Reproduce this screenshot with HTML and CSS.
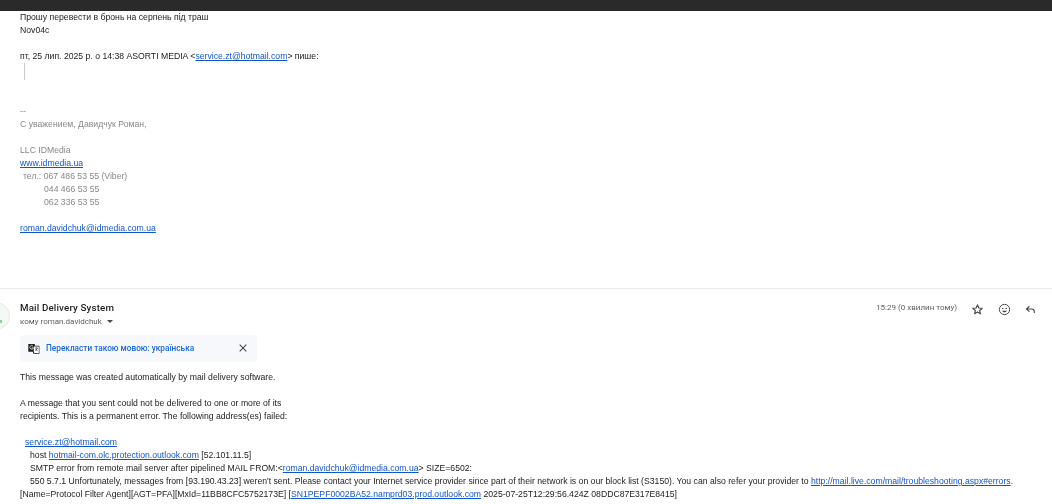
FILE: index.html
```html
<!DOCTYPE html>
<html lang="uk">
<head>
<meta charset="utf-8">
<title>Mail</title>
<link rel="stylesheet" href="styles.css">
</head>
<body>
<header class="topbar"></header>
<main class="thread">
  <section class="msg-first">
    <div class="text">
      <div>Прошу перевести в бронь на серпень під траш</div>
      <div>Nov04c</div>
      <div class="blank"></div>
      <div>пт, 25 лип. 2025 р. о 14:38 ASORTI MEDIA &lt;<a href="#">service.zt@hotmail.com</a>&gt; пише:</div>
      <div class="quote"></div>
      <div class="sig">
        <div>--</div>
        <div>С уважением, Давидчук Роман,</div>
        <div class="blank"></div>
        <div>LLC IDMedia</div>
        <div><a href="#">www.idmedia.ua</a></div>
        <div class="tel">тел.: 067 486 53 55 (Viber)</div>
        <div class="phone">044 466 53 55</div>
        <div class="phone">062 336 53 55</div>
        <div class="blank"></div>
        <div><a href="#">roman.davidchuk@idmedia.com.ua</a></div>
      </div>
    </div>
  </section>
  <section class="msg-second">
    <div class="avatar"><span class="avatar-mark"></span></div>
    <div class="head">
      <div class="who">
        <div class="sender">Mail Delivery System</div>
        <div class="to">кому roman.davidchuk <span class="caret"></span></div>
      </div>
      <div class="actions">
        <span class="time">15:29 (0 хвилин тому)</span>
        <svg class="icon star" viewBox="0 0 24 24"><path d="M12 3.500l2.500 5.700 6.200.6-4.700 4.100 1.400 6.100L12 16.800l-5.400 3.200L8 13.900 3.300 9.800l6.200-.6z" fill="none" stroke="#444746" stroke-width="2.100" stroke-linejoin="round"/></svg>
        <svg class="icon smile" viewBox="0 0 24 24"><circle cx="12" cy="12" r="9.500" fill="none" stroke="#444746" stroke-width="1.800"/><circle cx="8.800" cy="10" r="1.400" fill="#444746"/><circle cx="15.200" cy="10" r="1.400" fill="#444746"/><path d="M7.800 14.200h8.400c-.7 2-2.300 3.100-4.200 3.100s-3.500-1.100-4.200-3.100z" fill="#444746"/></svg>
        <svg class="icon reply" viewBox="0 0 24 24"><path d="M10 6l-5.500 5 5.500 5M5 11h9c3 0 5 2 5 5v2.500" fill="none" stroke="#444746" stroke-width="2"/></svg>
      </div>
    </div>
    <div class="translate">
      <svg class="gt" viewBox="0 0 20 20"><path d="M1 1.500h10l1 3h6.500a.5.500 0 0 1 .5.500v12.500a.5.500 0 0 1-.5.500H9l-1-3.500H1a.5.500 0 0 1-.5-.5V2a.5.500 0 0 1 .5-.5z" fill="#1f1f1f"/><path d="M10 6h8v10.500h-7.500l-1-3z" fill="#fff"/><path d="M8.500 5.500a3 3 0 1 0 .5 2.500H6" fill="none" stroke="#fff" stroke-width="1.200"/><path d="M11.500 8.500h5M14 7.500v1M15.500 8.500c-.5 2-2 3.500-3.500 4.500M12.800 10c.7 1.300 1.700 2.300 3.200 3" fill="none" stroke="#1f1f1f" stroke-width="1"/></svg>
      <a class="translate-link" href="#">Перекласти такою мовою: українська</a>
      <svg class="close" viewBox="0 0 12 12"><path d="M2 2l8 8M10 2l-8 8" stroke="#444746" stroke-width="1.300" fill="none"/></svg>
    </div>
    <div class="text body">
      <div>This message was created automatically by mail delivery software.</div>
      <div class="blank"></div>
      <div>A message that you sent could not be delivered to one or more of its</div>
      <div>recipients. This is a permanent error. The following address(es) failed:</div>
      <div class="blank"></div>
      <div class="in1"><a href="#">service.zt@hotmail.com</a></div>
      <div class="in2">host <a href="#">hotmail-com.olc.protection.outlook.com</a> [52.101.11.5]</div>
      <div class="in2">SMTP error from remote mail server after pipelined MAIL FROM:&lt;<a href="#">roman.davidchuk@idmedia.com.ua</a>&gt; SIZE=6502:</div>
      <div class="in2">550 5.7.1 Unfortunately, messages from [93.190.43.23] weren't sent. Please contact your Internet service provider since part of their network is on our block list (S3150). You can also refer your provider to <a href="#">http://mail.live.com/mail/troubleshooting.aspx#errors</a>.</div>
      <div>[Name=Protocol Filter Agent][AGT=PFA][MxId=11BB8CFC5752173E] [<a href="#">SN1PEPF0002BA52.namprd03.prod.outlook.com</a> 2025-07-25T12:29:56.424Z 08DDC87E317E8415]</div>
    </div>
  </section>
</main>
</body>
</html>
```
FILE: styles.css
```css
html, body {
  margin: 0;
  padding: 0;
  height: 504px;
  overflow: hidden;
  background: #fff;
}
body {
  font-family: "Liberation Sans", Arial, sans-serif;
  font-size: 8.667px;
  line-height: 13px;
  color: #222;
}
a { color: #1155cc; text-decoration: underline; }
.topbar { height: 11px; background: #2a2a2a; }
.thread { display: flex; flex-direction: column; filter: blur(.3px); }
.text { white-space: nowrap; }
.blank { height: 13px; }
.msg-first {
  height: 278px;
  padding: 0 0 0 20px;
  border-bottom: 1px solid #e8eaed;
  box-sizing: border-box;
}
.quote {
  margin: 0 0 0 4px;
  width: 1px;
  height: 17px;
  background: #ccc;
}
.sig { color: #888; margin-top: 25px; }
.tel { padding-left: 3px; }
.phone { padding-left: 24px; }
.msg-second { position: relative; padding: 12px 0 0 20px; }
.avatar {
  position: absolute;
  left: -20px;
  top: 13px;
  width: 28px;
  height: 26px;
  border-radius: 50%;
  background: #f4f9f5;
  border: 1px solid #e3efe6;
}
.avatar-mark {
  position: absolute;
  left: 19px;
  top: 17px;
  width: 2px;
  height: 3px;
  background: #8fd0a4;
}
.head { display: flex; justify-content: space-between; align-items: flex-start; }
.sender { font-family: Roboto, sans-serif; font-weight: 500; font-size: 9.750px; line-height: 14px; color: #1f1f1f; letter-spacing: .15px; }
.to { font-family: Roboto, sans-serif; font-size: 8px; line-height: 13px; color: #5e5e5e; margin-top: 0; }
.caret {
  display: inline-block;
  width: 0; height: 0;
  margin-left: 3px;
  vertical-align: middle;
  border-left: 3px solid transparent;
  border-right: 3px solid transparent;
  border-top: 3px solid #444746;
}
.actions { display: flex; align-items: center; gap: 13px; padding-right: 15px; }
.time { font-family: Roboto, sans-serif; font-size: 8px; color: #5e5e5e; margin-right: 1px; margin-top: -3px; }
.icon { width: 13px; height: 13px; display: block; margin-top: 2px; }
.star { margin-right: 1px; }
.translate {
  display: flex;
  align-items: center;
  width: 237px;
  height: 27px;
  margin-top: 7px;
  background: #f6f8fc;
  border-radius: 4px;
}
.gt { width: 12px; height: 12px; margin-left: 8px; }
.translate-link { font-family: Roboto, sans-serif; font-size: 8.250px; font-weight: 500; color: #1a66d6; text-decoration: none; margin-left: 6px; }
.close { width: 10px; height: 10px; margin-left: auto; margin-right: 9px; margin-top: -1px; }
.body { margin-top: 9px; }
.in1 { padding-left: 5px; }
.in2 { padding-left: 10px; }
```
